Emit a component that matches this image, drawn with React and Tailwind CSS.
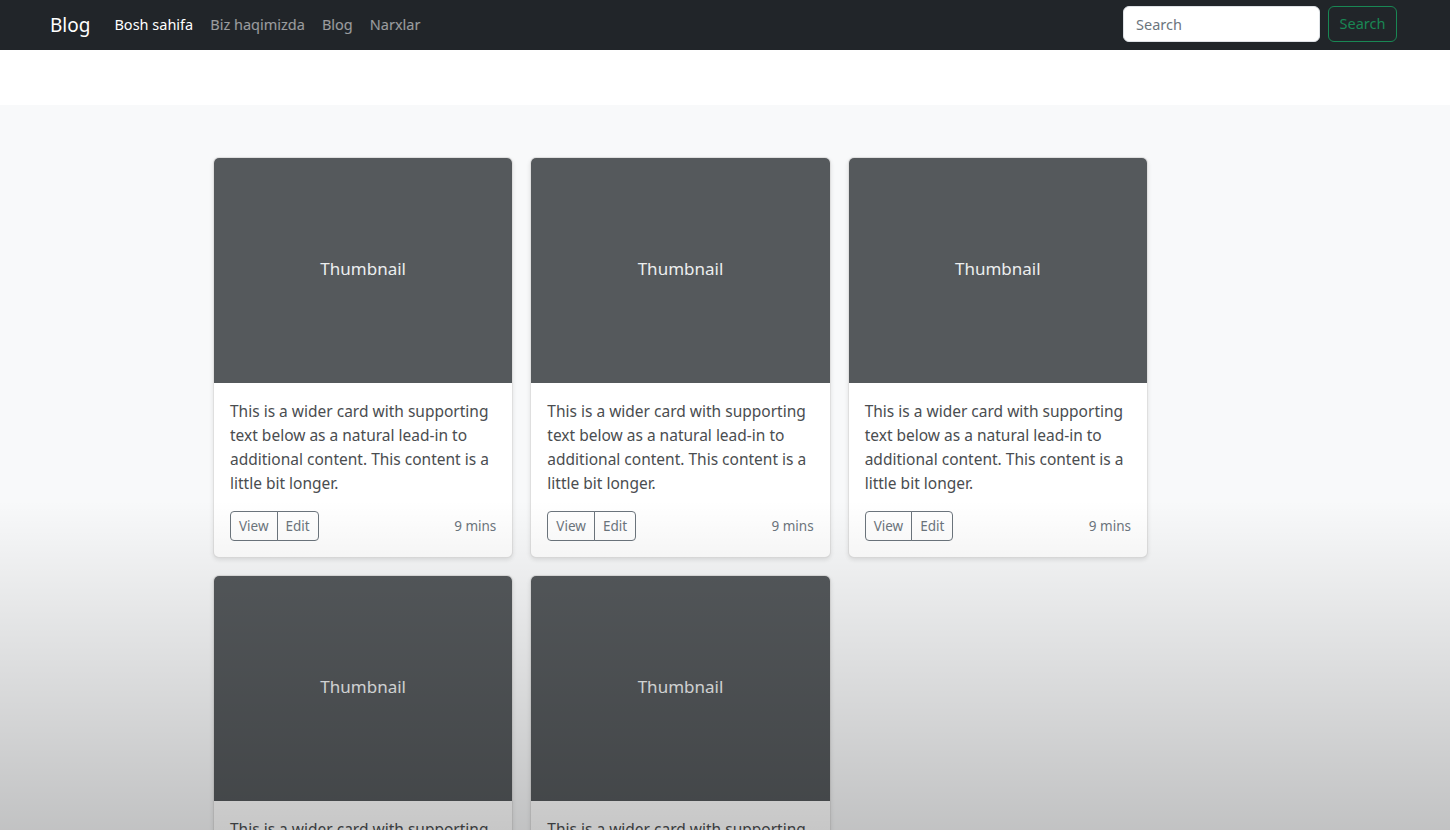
// App.jsx
const cards = [1, 2, 3, 4, 5];

function Card() {
  return (
    <div className="overflow-hidden rounded-[6px] border border-black/[0.125] bg-white shadow-[0_2px_4px_rgba(0,0,0,0.1)]">
      <div className="flex h-[225px] items-center justify-center bg-[#55595c] pb-[3px] text-[17px] text-[#eceeef]">
        Thumbnail
      </div>
      <div className="px-4 pb-4 pt-4">
        <p className="mb-4 text-[15.5px] leading-6 text-[#4a4d50]">
          This is a wider card with supporting text below as a natural lead-in to
          additional content. This content is a little bit longer.
        </p>
        <div className="flex items-center justify-between">
          <div className="flex">
            <button className="h-[30px] rounded-l-[4px] border border-[#6c757d] px-[8px] text-[13.5px] text-[#6c757d]">
              View
            </button>
            <button className="-ml-px h-[30px] rounded-r-[4px] border border-[#6c757d] px-[8px] text-[13.5px] text-[#6c757d]">
              Edit
            </button>
          </div>
          <small className="text-[13.5px] text-[#6c757d]">9 mins</small>
        </div>
      </div>
    </div>
  );
}

export default function App() {
  return (
    <div
      className="relative h-[830px] overflow-hidden bg-[#f8f9fa]"
      style={{ fontFamily: '"Noto Sans", "Open Sans", sans-serif' }}
    >
      {/* navbar */}
      <header className="flex h-[50px] items-center justify-between bg-[#212529] pl-[50px] pr-[53px]">
        <div className="flex items-center">
          <a className="mr-[24px] text-[19px] text-white">Blog</a>
          <nav className="flex items-center gap-[17px] text-[14.5px]">
            <a className="text-white">Bosh sahifa</a>
            <a className="text-white/55">Biz haqimizda</a>
            <a className="text-white/55">Blog</a>
            <a className="text-white/55">Narxlar</a>
          </nav>
        </div>
        <form className="-mt-[2px] flex items-center gap-2">
          <input
            placeholder="Search"
            className="h-[36px] w-[197px] rounded-[6px] border border-[#dee2e6] bg-white px-3 text-[14.5px] text-[#212529] placeholder:text-[#6c757d] focus:outline-none"
          />
          <button
            type="button"
            className="h-[36px] w-[69px] rounded-[6px] border border-[#198754] text-[14.5px] text-[#198754]"
          >
            Search
          </button>
        </form>
      </header>

      {/* hero strip */}
      <section className="h-[55px] bg-white" />

      {/* album */}
      <main className="pl-[213px] pt-[52px]">
        <div className="grid w-[935px] grid-cols-3 gap-[17px]">
          {cards.map((c) => (
            <Card key={c} />
          ))}
        </div>
      </main>

      <div className="pointer-events-none absolute inset-x-0 bottom-0 h-[330px] bg-gradient-to-b from-transparent to-black/[0.22]" />
    </div>
  );
}
